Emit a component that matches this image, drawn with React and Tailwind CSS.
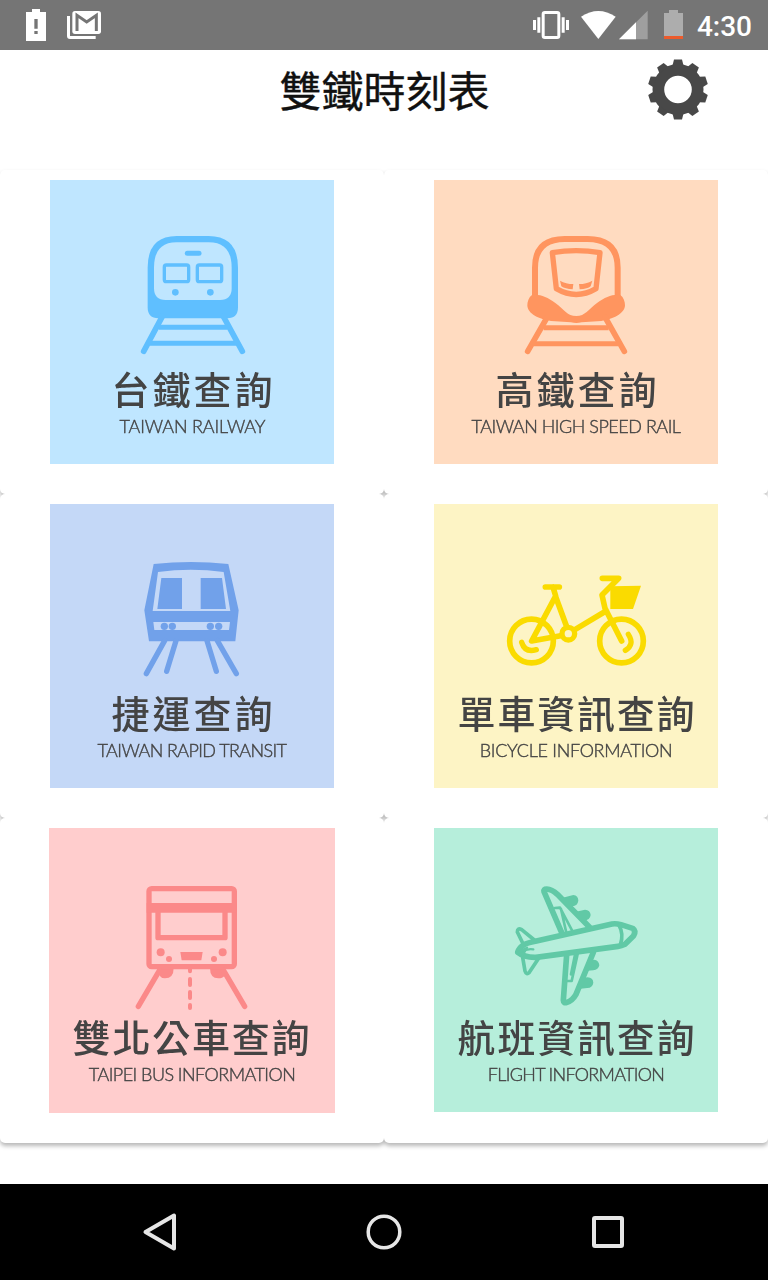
import React from 'react';

const RailwayIcon = () => (
	<g transform="translate(150 135)" fill="none" stroke="#5fbfff">
		<path d="M143 128Q143 33 230 33H326Q414 33 414 128V247Q414 280 382 280H175Q143 280 143 247Z" fill="#5fbfff" stroke="none"/>
		<path d="M162 128Q162 52 230 52H326Q395 52 395 128V190Q395 225 360 225H197Q162 225 162 190Z" fill="#bfe6ff" stroke="none"/>
		<path d="M262 85H297" strokeWidth="15" strokeLinecap="round"/>
		<rect x="193" y="120" width="73" height="50" rx="6" strokeWidth="10"/>
		<rect x="292" y="120" width="73" height="50" rx="6" strokeWidth="10"/>
		<circle cx="226" cy="202" r="10" fill="#5fbfff" stroke="none"/>
		<circle cx="331" cy="202" r="10" fill="#5fbfff" stroke="none"/>
		<path d="M187 274L131 379M370 274L427 379" strokeWidth="17" strokeLinecap="round"/>
		<path d="M176 307H382M150 355H408" strokeWidth="15"/>
	</g>
);

const HighSpeedIcon = () => (
	<g transform="translate(78 135)" fill="none" stroke="#ff955f">
		<path d="M225 218V128Q225 42 314 42H383Q473 42 473 128V218" strokeWidth="18"/>
		<path d="M216 210C238 206 262 216 285 233C314 254 321 273 349 273C376 273 384 253 412 233C436 216 459 206 481 210C491 217 495 230 495 241C495 266 456 284 424 288L365 292Q349 296 333 292L273 288C239 283 202 267 202 241C202 230 206 217 216 210Z" fill="#ff955f" stroke="none"/>
		<path d="M277 83Q349 71 420 83L408 191Q349 226 289 191Z" strokeWidth="16" strokeLinejoin="round"/>
		<path d="M300 167Q318 177 340 177L338 193Q315 192 304 184ZM397 167Q379 177 357 177L359 193Q383 192 392 184Z" fill="#ff955f" stroke="none"/>
		<path d="M262 276L203 379M435 276L493 379" strokeWidth="17" strokeLinecap="round"/>
		<path d="M251 308H446M222 356H474" strokeWidth="15"/>
	</g>
);

const MetroIcon = () => (
	<g transform="translate(120 138)" fill="#71a1ea">
		<path fillRule="evenodd" d="M191 42Q303 30 415 42L446 181L436 274H177L163 181ZM204 66L188 183H421L401 66Q303 52 204 66ZM190 216L193 240H417L420 216Z"/>
		<path d="M214 84H276V177H202ZM332 84H396L408 177H332Z"/>
		<circle cx="223" cy="229" r="11"/>
		<circle cx="247" cy="229" r="11"/>
		<circle cx="361" cy="229" r="11"/>
		<circle cx="386" cy="229" r="11"/>
		<path d="M224 272L169 371M258 272L230 364M351 272L379 364M382 272L439 371" stroke="#71a1ea" strokeWidth="16" strokeLinecap="round"/>
	</g>
);

const BicycleIcon = () => (
	<g transform="translate(48 168)" fill="none" stroke="#fadb00" strokeWidth="17" strokeLinecap="round" strokeLinejoin="round">
		<circle cx="244.500" cy="243" r="65.500"/>
		<circle cx="514.500" cy="243" r="65.500"/>
		<circle cx="355" cy="221" r="19" strokeWidth="16"/>
		<path d="M286 81H328M309 81L317 108L245 243L332 227M317 110L349 197"/>
		<path d="M376 208L468 153M457 55H506L456 105L465 145L515 243"/>
		<path d="M481 79L573 77L549 147H481Z" fill="#fadb00" stroke="none"/>
		<path d="M215 247Q225 279 259 269M535 223Q555 254 526 271" strokeWidth="16"/>
	</g>
);

const BusIcon = () => (
	<g transform="translate(30 141)" fill="#fb8989">
		<path d="M299 279H341Q341 310 315 310Q304 310 299 302ZM450 279H493V302Q488 310 475 310Q450 310 450 279Z"/>
		<rect x="267" y="41" width="256" height="234" rx="8" fill="none" stroke="#fb8989" strokeWidth="16"/>
		<path d="M260 84H530V113H260Z"/>
		<path d="M294 108V188H495V108" fill="none" stroke="#fb8989" strokeWidth="16" strokeLinejoin="round"/>
		<circle cx="302" cy="232" r="12"/>
		<circle cx="327" cy="252" r="9"/>
		<circle cx="488" cy="232" r="12"/>
		<circle cx="462" cy="252" r="9"/>
		<path d="M361 231H428L424 256H365Z"/>
		<path d="M298 287L235 394M491 287L554 394" stroke="#fb8989" strokeWidth="16" strokeLinecap="round"/>
		<path d="M390 281V289M390 312V330M390 351V369M390 390V399" stroke="#fb8989" strokeWidth="12" strokeLinecap="round"/>
	</g>
);

const FlightIcon = () => (
	<g transform="translate(48 141)" fill="none" stroke="#61c9a6" strokeLinejoin="round" strokeLinecap="round">
		<path d="M338 68L370 60Q385 62 385 77Q383 92 367 94L360 95ZM378 110L405 104Q421 105 422 120Q420 136 402 136L398 134ZM415 258L432 254Q447 256 448 271Q445 284 430 286L404 288ZM396 309L413 307Q429 308 430 323Q428 338 412 339L385 342Z" fill="#61c9a6" stroke="none"/>
		<path d="M336 175L282 50Q280 42 290 42Q306 43 322 58L418 156" strokeWidth="17"/>
		<path d="M314 99L330 98L366 166M333 102L348 169" strokeWidth="8"/>
		<path d="M350 239L340 376Q340 386 351 382Q368 376 378 358L430 232" strokeWidth="17"/>
		<path d="M351 318L365 318L383 237M363 298L375 239" strokeWidth="8"/>
		<path d="M218 204L202 171Q202 157 215 164L253 195M218 247L225 288Q229 301 238 292L267 248" strokeWidth="11"/>
		<path d="M203 232C209 213 224 205 256 199L486 147Q498 145 513 149L548 160Q559 168 551 182L525 208Q515 213 504 214L258 247Q223 248 203 232Z" strokeWidth="17"/>
		<path d="M507 151Q522 176 511 210" strokeWidth="11"/>
		<path d="M214 231Q231 220 250 223" strokeWidth="7"/>
		<path d="M207 231L231 218L218 240Z" fill="#61c9a6" strokeWidth="7"/>
	</g>
);

const MENU = [
	{ id: 'tra', title: '台鐵查詢', sub: 'TAIWAN RAILWAY', tile: 'bg-[#bfe6ff] w-[284px] h-[284px]', titleGap: 'pl-[3px] tracking-[3px]', subGap: 'pl-px tracking-[-0.15px]', Icon: RailwayIcon },
	{ id: 'thsr', title: '高鐵查詢', sub: 'TAIWAN HIGH SPEED RAIL', tile: 'bg-[#ffdbc0] w-[284px] h-[284px]', titleGap: 'pl-[3px] tracking-[3px]', subGap: 'tracking-[-0.48px]', Icon: HighSpeedIcon },
	{ id: 'mrt', title: '捷運查詢', sub: 'TAIWAN RAPID TRANSIT', tile: 'bg-[#c4d8f7] w-[284px] h-[284px]', titleGap: 'pl-[3px] tracking-[3px]', subGap: 'tracking-[-0.6px]', Icon: MetroIcon },
	{ id: 'bike', title: '單車資訊查詢', sub: 'BICYCLE INFORMATION', tile: 'bg-[#fdf4c5] w-[284px] h-[284px]', titleGap: 'pl-[2px] tracking-[1.8px]', subGap: 'tracking-[-0.3px]', Icon: BicycleIcon },
	{ id: 'bus', title: '雙北公車查詢', sub: 'TAIPEI BUS INFORMATION', tile: 'bg-[#ffcdcd] w-[286px] h-[285px] -ml-px', titleGap: 'tracking-[1.8px]', subGap: 'tracking-[-0.54px]', Icon: BusIcon },
	{ id: 'flight', title: '航班資訊查詢', sub: 'FLIGHT INFORMATION', tile: 'bg-[#b6eedb] w-[284px] h-[284px]', titleGap: 'pl-[2px] tracking-[1.8px]', subGap: 'tracking-[-0.7px]', Icon: FlightIcon },
];

const TEETH = [0, 36, 72, 108, 144, 180, 216, 252, 288, 324];

const StatusBar = () => (
	<div className="flex h-[50px] items-center justify-between bg-[#757575] pl-[26px] pr-4">
		<div className="flex items-center gap-[21px]">
			<svg width="20" height="50" viewBox="0 0 60 150">
				<path fill="#fff" fillRule="evenodd" d="M18 27H42V36H60V123H0V36H18ZM25 57V86H35V57ZM25 93V102H35V93Z"/>
			</svg>
			<svg width="34" height="50" viewBox="0 0 102 150">
				<path d="M4.500 48V108Q4.500 112.500 9 112.500H86" fill="none" stroke="#fff" strokeWidth="9"/>
				<rect x="16" y="33" width="86" height="69" rx="8" fill="#fff"/>
				<path d="M30 93V46L59 66L88 46V93" fill="none" stroke="#757575" strokeWidth="9"/>
			</svg>
		</div>
		<div className="flex items-center">
			<svg width="36" height="50" viewBox="0 0 108 150">
				<rect x="30.500" y="37.500" width="47" height="75" rx="5" fill="none" stroke="#fff" strokeWidth="9"/>
				<path d="M0 60H9V90H0ZM13 52H22V98H13ZM86 52H95V98H86ZM99 60H108V90H99Z" fill="#fff"/>
			</svg>
			<svg width="35" height="50" viewBox="0 0 105 150" className="ml-[12px]">
				<path d="M0 50Q52 16 104 50L52 117Z" fill="#fff"/>
			</svg>
			<svg width="29" height="50" viewBox="0 0 87 150" className="ml-[3px]">
				<path d="M0 118L86 32V118Z" fill="#9f9f9f"/>
				<path d="M0 118L51 67V118Z" fill="#fff"/>
			</svg>
			<svg width="19" height="50" viewBox="0 0 57 150" className="ml-[16px]">
				<path d="M15 30H42V39H57V108H0V39H15Z" fill="#adadad"/>
				<path d="M0 108H57V117H0Z" fill="#ec5b2c"/>
			</svg>
			<span className="ml-[14px] mt-1 whitespace-nowrap font-['Roboto',sans-serif] text-[28px] font-medium leading-[46px] text-white">4:30</span>
		</div>
	</div>
);

const Header = () => (
	<div className="grid h-[120px] grid-cols-3 items-start px-[60px]">
		<h1 className="col-start-2 mt-2 justify-self-center whitespace-nowrap pl-px font-['Noto_Sans_CJK_TC',sans-serif] text-[42px] font-normal leading-[62px] text-[#111] [-webkit-text-stroke:0.35px_#111]">雙鐵時刻表</h1>
		<button className="mt-[9px] -mr-px justify-self-end" aria-label="settings">
			<svg width="62" height="62" viewBox="-31 -30.5 62 62" fill="#484848">
				<path fillRule="evenodd" d="M-25.500 0A25.500 25.500 0 1 1 25.500 0A25.500 25.500 0 1 1 -25.500 0ZM-13.800 0A13.800 13.800 0 1 0 13.800 0A13.800 13.800 0 1 0 -13.800 0Z"/>
				{TEETH.map((deg) => (
					<path key={deg} d="M-5.500 -24L-4 -30H4L5.500 -24Z" transform={`rotate(${deg})`}/>
				))}
			</svg>
		</button>
	</div>
);

const MenuCard = ({ item }) => {
	const { Icon } = item;
	return (
		<div className="rounded-[5px] bg-white pl-[50px] pt-[10px]">
			<button className={`flex flex-col items-center text-[#444] ${item.tile}`}>
				<svg width="284" height="180" viewBox="0 0 852 540" className="shrink-0 overflow-visible">
					<Icon/>
				</svg>
				<span className={`whitespace-nowrap font-['Noto_Sans_CJK_TC',sans-serif] text-[38px] font-medium leading-[56px] ${item.titleGap}`}>{item.title}</span>
				<span className={`whitespace-nowrap font-['Lato',sans-serif] text-[18px] font-light leading-[20px] [-webkit-text-stroke:0.4px_#444] ${item.subGap}`}>{item.sub}</span>
			</button>
		</div>
	);
};

const NavBar = () => (
	<div className="flex h-24 items-center justify-between bg-black px-[136px]">
		<svg width="48" height="48" viewBox="0 0 48 48" fill="none" stroke="#e6e6e6" strokeWidth="4" strokeLinejoin="round">
			<path d="M9.500 24L38 7.500V40.500Z"/>
		</svg>
		<svg width="48" height="48" viewBox="0 0 48 48" fill="none" stroke="#e6e6e6" strokeWidth="3.500">
			<circle cx="24" cy="24" r="15.800"/>
		</svg>
		<svg width="48" height="48" viewBox="0 0 48 48" fill="none" stroke="#e6e6e6" strokeWidth="4">
			<rect x="10" y="10" width="28" height="28" rx="1"/>
		</svg>
	</div>
);

const App = () => {
	return (
		<div className="flex h-[1280px] w-[768px] flex-col overflow-hidden bg-white">
			<StatusBar/>
			<Header/>
			<div className="flex-1">
				{/* one shadow for the whole group, so it never falls on a neighbour card */}
				<div className="grid grid-cols-2 grid-rows-[324px_324px_325px] drop-shadow-[0_3px_2px_rgba(0,0,0,0.28)]">
					{MENU.map((item) => (
						<MenuCard key={item.id} item={item}/>
					))}
				</div>
			</div>
			<NavBar/>
		</div>
	);
};

export default App;
